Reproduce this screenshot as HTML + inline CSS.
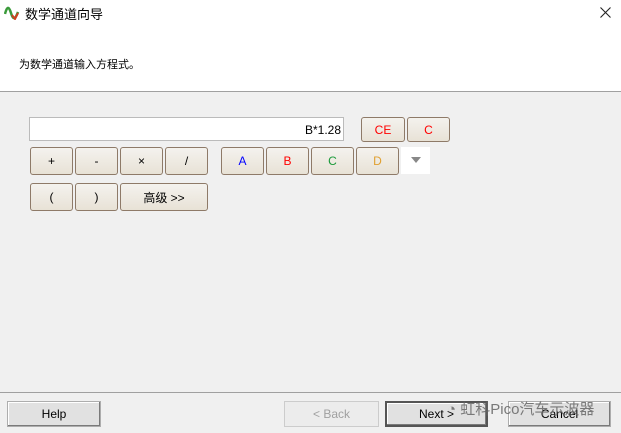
<!DOCTYPE html>
<html><head><meta charset="utf-8"><style>
*{margin:0;padding:0;box-sizing:border-box}
body{width:621px;height:433px;overflow:hidden;background:#f0f0f0;font-family:"Liberation Sans","Noto Sans CJK SC",sans-serif;font-size:12px;position:relative}
.abs{position:absolute}
.hdr{left:0;top:0;width:621px;height:92px;background:#fff;border-bottom:1px solid #a0a0a0}
.b{position:absolute;border:1px solid #8e7a68;border-radius:3px;background:linear-gradient(#f4f2ee,#e8e2d6);display:flex;align-items:center;justify-content:center;font-size:12px}
.w{position:absolute;display:flex;align-items:center;justify-content:center;font-size:12px;background:#e1e1e1;border:1px solid #adadad;box-shadow:inset -1px -1px #7a7a7a,inset 1px 1px #fff}
</style></head><body>
<div class="abs hdr"></div>
<svg class="abs" style="left:4px;top:6px" width="16" height="14" viewBox="0 0 16 14"><path d="M1 8 C3 0,5 0,7 7 C9 14,11 14,14 6" stroke="#3a9a3a" stroke-width="2.5" fill="none"/><path d="M8 9 L11 13 L14 7" stroke="#d04020" stroke-width="2" fill="none"/></svg>
<div class="abs" style="left:25px;top:4px;font-size:13px">数学通道向导</div>
<svg class="abs" style="left:600px;top:7px" width="11" height="11" viewBox="0 0 11 11"><path d="M0.5 0.5L10.5 10.5M10.5 0.5L0.5 10.5" stroke="#222" stroke-width="1.1"/></svg>
<div class="abs" style="left:19px;top:56px;font-size:11px">为数学通道输入方程式。</div>
<div class="abs" style="left:29px;top:117px;width:315px;height:24px;background:#fff;border:1px solid #bbb;text-align:right;padding:5px 2px 0 0;font-size:12px">B*1.28</div>
<div class="b" style="left:361px;top:117px;width:44px;height:25px;color:#f00">CE</div>
<div class="b" style="left:407px;top:117px;width:43px;height:25px;color:#f00">C</div>
<div class="b" style="left:30px;top:147px;width:43px;height:28px">+</div>
<div class="b" style="left:75px;top:147px;width:43px;height:28px">-</div>
<div class="b" style="left:120px;top:147px;width:43px;height:28px">×</div>
<div class="b" style="left:165px;top:147px;width:43px;height:28px">/</div>
<div class="b" style="left:221px;top:147px;width:43px;height:28px;color:#00f">A</div>
<div class="b" style="left:266px;top:147px;width:43px;height:28px;color:#f00">B</div>
<div class="b" style="left:311px;top:147px;width:43px;height:28px;color:#1a9a3a">C</div>
<div class="b" style="left:356px;top:147px;width:43px;height:28px;color:#e0a030">D</div>
<div class="abs" style="left:401px;top:147px;width:29px;height:27px;background:#fff"><div style="margin:10px auto 0;width:0;height:0;border-left:5px solid transparent;border-right:5px solid transparent;border-top:6px solid #888"></div></div>
<div class="b" style="left:30px;top:183px;width:43px;height:28px">(</div>
<div class="b" style="left:75px;top:183px;width:43px;height:28px">)</div>
<div class="b" style="left:120px;top:183px;width:88px;height:28px">高级 &gt;&gt;</div>
<div class="abs" style="left:0;top:392px;width:621px;height:1px;background:#a0a0a0"></div>
<div class="w" style="left:7px;top:401px;width:94px;height:26px">Help</div>
<div class="w" style="left:284px;top:401px;width:95px;height:26px;color:#a0a0a0;background:#ececec;box-shadow:none;border-color:#ccc">&lt; Back</div>
<div class="w" style="left:385px;top:401px;width:103px;height:26px;border:2px solid #555">Next &gt;</div>
<div class="w" style="left:508px;top:401px;width:103px;height:26px">Cancel</div>
<div class="abs" style="left:447px;top:398px;font-size:15px;color:#666;opacity:.85">◔ 虹科Pico汽车示波器</div>
</body></html>
